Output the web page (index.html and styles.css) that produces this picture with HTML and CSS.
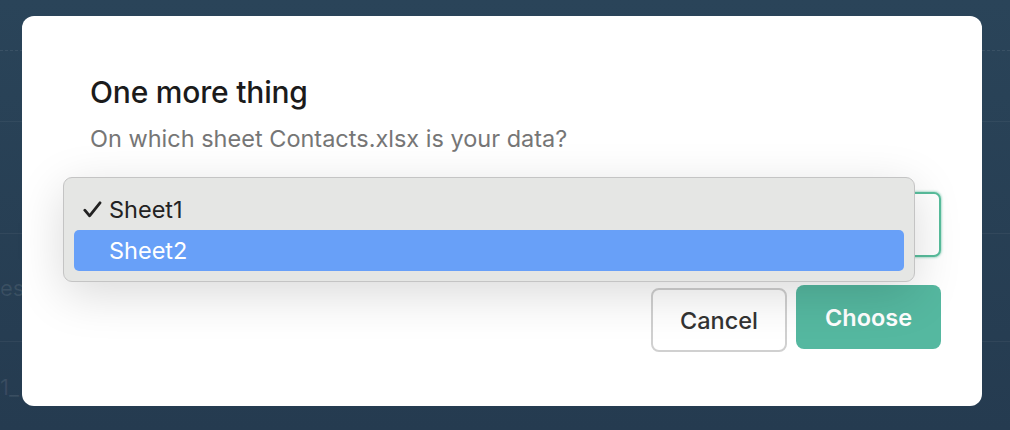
FILE: index.html
```html
<!DOCTYPE html>
<html>
<head>
<meta charset="utf-8">
<link rel="stylesheet" href="styles.css">
</head>
<body>
<div class="backdrop">
  <div class="brow brow-head dashed"></div>
  <div class="brow brow-a"></div>
  <div class="brow brow-b"></div>
  <div class="brow brow-c"><span class="faint">ess</span></div>
  <div class="brow brow-d"><span class="faint">1_</span></div>
</div>

<div class="modal">
  <h1 class="title">One more thing</h1>
  <p class="subtitle">On which sheet Contacts.xlsx is your data?</p>
  <div class="select-wrap">
    <div class="select"><span class="select-arrow"></span></div>
    <div class="menu">
      <div class="menu-item">
        <span class="check"><svg width="19" height="17" viewBox="0 0 19 17"><path d="M1.8 9.2 L6.6 14.8 L17 1.8" fill="none" stroke="#222" stroke-width="2.8" stroke-linecap="round" stroke-linejoin="round"/></svg></span>Sheet1
      </div>
      <div class="menu-item active"><span class="check"></span>Sheet2</div>
    </div>
  </div>
  <div class="actions">
    <button class="btn btn-cancel">Cancel</button>
    <button class="btn btn-choose">Choose</button>
  </div>
</div>
</body>
</html>
```

FILE: styles.css
```css
html, body {
  margin: 0;
  padding: 0;
  height: 100%;
}
body {
  width: 1010px;
  height: 430px;
  overflow: hidden;
  position: relative;
  background: linear-gradient(#2a4459, #253b50);
  font-family: Inter, "Noto Sans", sans-serif;
}
.backdrop {
  display: flex;
  flex-direction: column;
}
.brow {
  border-bottom: 1px solid rgba(255,255,255,0.05);
  display: flex;
  align-items: center;
  color: rgba(255,255,255,0.09);
  font-size: 22px;
}
.brow.dashed { border-bottom: 1px dashed rgba(255,255,255,0.08); }
.brow-head { height: 50px; }
.brow-a { height: 70px; }
.brow-b { height: 111px; }
.brow-c { height: 107px; }
.brow-d { height: 89px; }
.faint { padding-left: 0; }

.modal {
  position: absolute;
  left: 22px;
  top: 16px;
  width: 960px;
  height: 390px;
  box-sizing: border-box;
  background: #fff;
  border-radius: 12px;
  padding: 58px 41px 0 68px;
}
.title {
  margin: 0;
  font-size: 30px;
  line-height: 36px;
  font-weight: 500;
  color: #1b1b1b;
  letter-spacing: -0.2px;
}
.subtitle {
  margin: 14px 0 0;
  font-size: 23.5px;
  line-height: 30px;
  color: #767676;
}
.select-wrap {
  position: relative;
  margin-top: 38px;
}
.select {
  height: 65px;
  box-sizing: border-box;
  border: 2px solid #58bd9c;
  border-radius: 7px;
  background: #fff;
  position: relative;
  box-shadow: 0 0 2px 1px rgba(88,189,156,0.45);
}
.select-arrow {
  position: absolute;
  right: 24px;
  top: 27px;
  width: 3px;
  height: 3px;
  background: #555;
}
.menu {
  position: absolute;
  left: -27px;
  top: -15px;
  width: 852px;
  height: 105px;
  box-sizing: border-box;
  background: #e5e6e4;
  border: 1px solid #c4c4c4;
  border-radius: 9px;
  padding: 11px 10px 0;
  box-shadow: 0 12px 48px rgba(0,0,0,0.15);
}
.menu-item {
  height: 41px;
  display: flex;
  align-items: center;
  font-size: 23.5px;
  color: #222;
  border-radius: 5px;
  padding-left: 9px;
}
.menu-item.active {
  background: #68a0f8;
  color: #fff;
}
.check {
  width: 26px;
  display: flex;
  align-items: center;
}
.actions {
  display: flex;
  justify-content: flex-end;
  gap: 9px;
  margin-top: 28px;
  align-items: flex-start;
}
.btn {
  font-family: Inter, "Noto Sans", sans-serif;
  font-size: 23.5px;
  border-radius: 8px;
  cursor: pointer;
  box-sizing: border-box;
}
.btn-cancel {
  margin-top: 3px;
  width: 136px;
  height: 64px;
  background: #fff;
  border: 2px solid #d0d0d0;
  color: #333;
  font-weight: 500;
}
.btn-choose {
  width: 145px;
  height: 64px;
  background: #55b8a0;
  border: none;
  color: #fff;
  font-weight: 600;
}
```
